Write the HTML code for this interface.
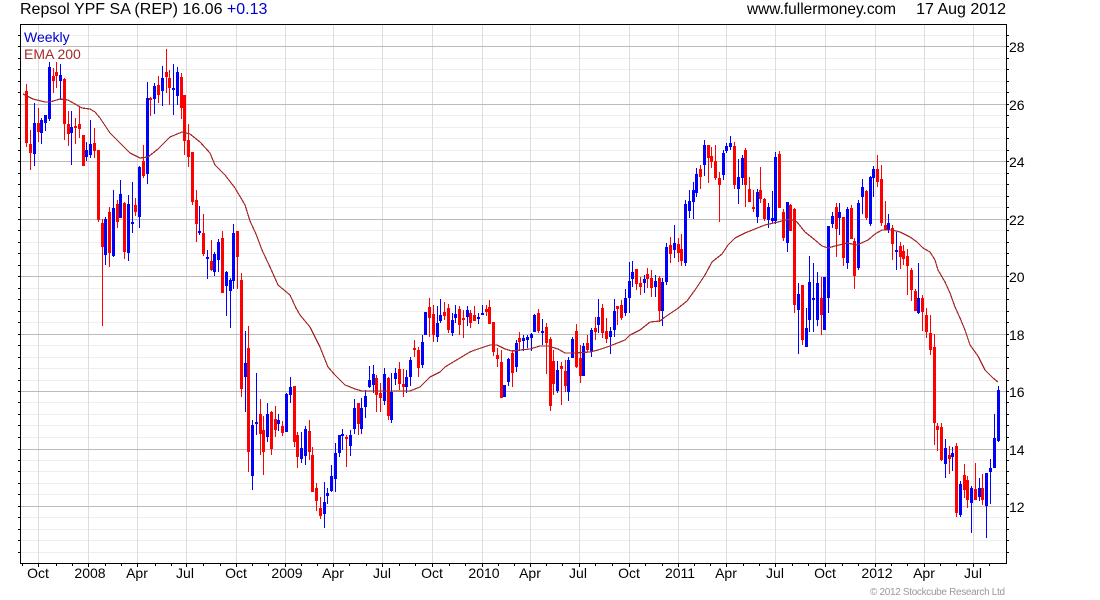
<!DOCTYPE html>
<html><head><meta charset="utf-8"><title>Repsol YPF SA (REP)</title>
<style>html,body{margin:0;padding:0;background:#fff;width:1100px;height:600px;overflow:hidden}svg{display:block}text{font-family:"Liberation Sans",Arial,sans-serif;font-size:14px;fill:#000}</style></head>
<body>
<svg width="1100" height="600" viewBox="0 0 1100 600" xmlns="http://www.w3.org/2000/svg">
<g shape-rendering="crispEdges" fill="none">
<path stroke="#eee" d="M21 35.5H1006M21 58.5H1006M21 69.5H1006M21 81.5H1006M21 92.5H1006M21 115.5H1006M21 127.5H1006M21 138.5H1006M21 150.5H1006M21 173.5H1006M21 184.5H1006M21 196.5H1006M21 207.5H1006M21 230.5H1006M21 242.5H1006M21 253.5H1006M21 265.5H1006M21 288.5H1006M21 299.5H1006M21 311.5H1006M21 322.5H1006M21 345.5H1006M21 357.5H1006M21 368.5H1006M21 380.5H1006M21 402.5H1006M21 414.5H1006M21 425.5H1006M21 437.5H1006M21 460.5H1006M21 471.5H1006M21 483.5H1006M21 494.5H1006M21 517.5H1006M21 529.5H1006M21 540.5H1006M21 552.5H1006"/>
<path stroke="#ddd" d="M38.5 25V563M88.5 25V563M137.5 25V563M186.5 25V563M236.5 25V563M285.5 25V563M333.5 25V563M382.5 25V563M432.5 25V563M482.5 25V563M530.5 25V563M579.5 25V563M629.5 25V563M678.5 25V563M726.5 25V563M775.5 25V563M825.5 25V563M875.5 25V563M924.5 25V563M973.5 25V563"/>
<path stroke="#bbb" d="M21 46.5H1006M21 104.5H1006M21 161.5H1006M21 219.5H1006M21 276.5H1006M21 334.5H1006M21 391.5H1006M21 449.5H1006M21 506.5H1006"/>
<path stroke="#000" d="M20.5 24.5H1006.5V563.5H20.5Z"/>
<path stroke="#000" d="M18 35.5h2M18 46.5h2M18 58.5h2M18 69.5h2M18 81.5h2M18 92.5h2M18 104.5h2M18 115.5h2M18 127.5h2M18 138.5h2M18 150.5h2M18 161.5h2M18 173.5h2M18 184.5h2M18 196.5h2M18 207.5h2M18 219.5h2M18 230.5h2M18 242.5h2M18 253.5h2M18 265.5h2M18 276.5h2M18 288.5h2M18 299.5h2M18 311.5h2M18 322.5h2M18 334.5h2M18 345.5h2M18 357.5h2M18 368.5h2M18 380.5h2M18 391.5h2M18 402.5h2M18 414.5h2M18 425.5h2M18 437.5h2M18 449.5h2M18 460.5h2M18 471.5h2M18 483.5h2M18 494.5h2M18 506.5h2M18 517.5h2M18 529.5h2M18 540.5h2M18 552.5h2"/>
<path stroke="#000" d="M1007 35.5h2M1007 46.5h2M1007 58.5h2M1007 69.5h2M1007 81.5h2M1007 92.5h2M1007 104.5h2M1007 115.5h2M1007 127.5h2M1007 138.5h2M1007 150.5h2M1007 161.5h2M1007 173.5h2M1007 184.5h2M1007 196.5h2M1007 207.5h2M1007 219.5h2M1007 230.5h2M1007 242.5h2M1007 253.5h2M1007 265.5h2M1007 276.5h2M1007 288.5h2M1007 299.5h2M1007 311.5h2M1007 322.5h2M1007 334.5h2M1007 345.5h2M1007 357.5h2M1007 368.5h2M1007 380.5h2M1007 391.5h2M1007 402.5h2M1007 414.5h2M1007 425.5h2M1007 437.5h2M1007 449.5h2M1007 460.5h2M1007 471.5h2M1007 483.5h2M1007 494.5h2M1007 506.5h2M1007 517.5h2M1007 529.5h2M1007 540.5h2M1007 552.5h2"/>
<path stroke="#000" d="M38.5 564v3M88.5 564v3M137.5 564v3M186.5 564v3M236.5 564v3M285.5 564v3M333.5 564v3M382.5 564v3M432.5 564v3M482.5 564v3M530.5 564v3M579.5 564v3M629.5 564v3M678.5 564v3M726.5 564v3M775.5 564v3M825.5 564v3M875.5 564v3M924.5 564v3M973.5 564v3M22.5 564v2M56.5 564v2M72.5 564v2M105.5 564v2M121.5 564v2M155.5 564v2M171.5 564v2M203.5 564v2M220.5 564v2M252.5 564v2M268.5 564v2M301.5 564v2M317.5 564v2M349.5 564v2M366.5 564v2M399.5 564v2M415.5 564v2M449.5 564v2M465.5 564v2M498.5 564v2M514.5 564v2M546.5 564v2M562.5 564v2M595.5 564v2M612.5 564v2M645.5 564v2M662.5 564v2M694.5 564v2M710.5 564v2M743.5 564v2M759.5 564v2M792.5 564v2M808.5 564v2M842.5 564v2M858.5 564v2M891.5 564v2M907.5 564v2M940.5 564v2M956.5 564v2M989.5 564v2"/>
<path stroke="#f00" d="M26.5 84V147M30.5 130V170M38.5 108V142M53.5 68V93M56.5 62V88M64.5 78V140M68.5 111V146M75.5 118V144M79.5 107V138M83.5 135V166M94.5 128V158M98.5 150V222M102.5 219V326M109.5 207V267M117.5 200V228M124.5 202V259M135.5 198V216M143.5 145V178M150.5 97V116M158.5 76V103M166.5 49V93M169.5 70V105M181.5 73V119M184.5 95V155M188.5 124V167M192.5 152V205M196.5 190V242M203.5 214V256M211.5 240V271M222.5 231V293M237.5 231V289M241.5 273V397M248.5 326V472M260.5 399V455M263.5 416V475M271.5 411V455M275.5 406V437M282.5 421V436M294.5 386V447M297.5 432V468M309.5 420V460M312.5 447V492M316.5 483V511M320.5 497V519M346.5 435V467M358.5 403V435M376.5 375V412M380.5 383V412M388.5 377V420M399.5 362V390M403.5 369V397M414.5 340V357M418.5 347V377M429.5 298V337M433.5 305V342M444.5 302V320M448.5 304V333M459.5 306V335M463.5 310V338M470.5 310V328M474.5 306V321M486.5 305V316M489.5 300V324M493.5 322V356M497.5 348V367M501.5 350V398M512.5 350V387M519.5 332V351M538.5 309V333M546.5 323V374M550.5 337V411M553.5 350V395M561.5 362V405M565.5 360V392M576.5 324V368M580.5 345V383M587.5 335V352M595.5 317V340M602.5 304V338M606.5 318V343M617.5 306V325M621.5 300V320M636.5 269V290M640.5 277V295M647.5 268V288M651.5 270V297M659.5 276V322M670.5 237V263M678.5 238V262M681.5 234V266M700.5 165V189M708.5 145V183M711.5 147V168M715.5 145V180M719.5 172V222M734.5 142V189M745.5 148V207M749.5 177V202M753.5 190V212M760.5 167V203M764.5 198V221M779.5 151V208M783.5 209V241M790.5 204V231M794.5 208V313M802.5 285V345M821.5 277V335M836.5 203V257M843.5 217V266M851.5 205V239M854.5 238V289M866.5 190V220M877.5 155V187M881.5 165V226M885.5 201V230M892.5 225V260M900.5 242V269M903.5 245V265M907.5 249V295M911.5 268V301M915.5 289V311M922.5 295V331M926.5 308V338M930.5 315V355M934.5 334V445M937.5 423V451M941.5 423V461M949.5 446V474M956.5 443V517M964.5 464V498M967.5 476V508M975.5 463V500M982.5 474V505"/>
<path stroke="#00f" d="M34.5 103V166M41.5 118V144M45.5 115V131M49.5 62V121M60.5 64V100M71.5 111V165M86.5 142V161M90.5 120V158M105.5 217V265M113.5 190V257M120.5 180V218M128.5 195V261M132.5 182V233M139.5 166V228M147.5 82V184M154.5 83V114M162.5 66V106M173.5 64V115M177.5 67V105M199.5 206V235M207.5 250V279M214.5 252V276M218.5 239V272M226.5 271V316M230.5 278V328M233.5 224V289M245.5 331V412M252.5 420V490M256.5 373V435M267.5 403V442M278.5 414V431M286.5 393V432M290.5 377V403M301.5 432V463M305.5 426V465M324.5 482V528M327.5 488V504M331.5 465V492M335.5 443V492M339.5 435V457M342.5 429V450M350.5 430V456M354.5 399V434M361.5 398V434M365.5 390V418M369.5 366V388M373.5 365V393M384.5 368V405M391.5 373V423M395.5 368V385M406.5 370V393M410.5 357V386M422.5 335V368M425.5 312V335M437.5 306V342M440.5 299V323M452.5 313V336M455.5 305V323M467.5 306V326M478.5 313V324M482.5 305V315M504.5 385V397M508.5 358V386M516.5 340V372M523.5 335V351M527.5 335V348M531.5 333V351M534.5 314V332M542.5 319V345M557.5 361V393M568.5 357V401M572.5 337V358M583.5 343V376M591.5 328V357M598.5 299V333M610.5 327V354M614.5 299V337M625.5 289V316M629.5 262V313M632.5 261V287M644.5 275V293M655.5 275V297M662.5 278V326M666.5 243V285M674.5 225V258M685.5 200V266M689.5 190V218M693.5 182V219M696.5 168V197M704.5 140V176M723.5 150V180M726.5 143V153M730.5 136V150M738.5 159V204M742.5 155V185M757.5 189V223M768.5 203V228M772.5 191V223M775.5 152V224M787.5 202V252M798.5 283V354M806.5 308V347M809.5 256V332M813.5 263V332M817.5 272V326M824.5 277V330M828.5 226V313M832.5 212V228M839.5 203V235M847.5 207V269M858.5 200V270M862.5 179V214M870.5 176V226M873.5 166V197M888.5 214V233M896.5 232V270M918.5 263V314M945.5 439V478M952.5 447V471M960.5 481V517M971.5 486V533M979.5 478V501M986.5 473V538M990.5 459V504M994.5 414V468M998.5 386V442"/>
<path stroke="#f00" stroke-width="3" d="M26.5 91V143M30.5 144V153M38.5 123V132M53.5 76V81M56.5 72V76M64.5 79V124M68.5 124V134M75.5 126V128M79.5 124V129M83.5 135V166M94.5 143V151M98.5 150V220M102.5 223V247M109.5 212V253M117.5 204V222M124.5 203V252M135.5 205V212M143.5 161V176M150.5 98V100M158.5 85V95M166.5 72V77M169.5 78V88M181.5 77V108M184.5 95V141M188.5 140V157M192.5 152V202M196.5 200V224M203.5 233V254M211.5 261V270M222.5 238V293M237.5 231V257M241.5 280V389M248.5 348V452M260.5 414V434M263.5 430V452M271.5 412V449M275.5 419V430M282.5 426V433M294.5 386V442M297.5 435V457M309.5 431V452M312.5 455V492M316.5 488V501M320.5 508V516M346.5 437V439M358.5 403V424M376.5 378V395M380.5 393V398M388.5 378V416M399.5 369V384M403.5 384V387M414.5 348V350M418.5 350V368M429.5 307V318M433.5 314V335M444.5 312V316M448.5 308V330M459.5 309V325M463.5 318V320M470.5 313V323M474.5 315V321M486.5 309V312M489.5 307V324M493.5 322V352M497.5 355V359M501.5 362V398M512.5 353V373M519.5 338V342M538.5 313V331M546.5 327V343M550.5 339V406M553.5 361V384M561.5 366V369M565.5 371V386M576.5 331V367M580.5 358V376M587.5 343V350M595.5 328V332M602.5 308V333M606.5 331V339M617.5 306V309M621.5 305V318M636.5 269V284M640.5 283V287M647.5 274V279M651.5 278V288M659.5 278V311M670.5 245V254M678.5 244V253M681.5 249V261M700.5 169V177M708.5 145V158M711.5 156V162M715.5 161V178M719.5 178V185M734.5 146V185M745.5 150V185M749.5 189V202M753.5 207V209M760.5 190V199M764.5 199V219M779.5 154V208M783.5 212V238M790.5 205V231M794.5 209V305M802.5 285V340M821.5 298V315M836.5 207V229M843.5 217V258M851.5 208V239M854.5 241V276M866.5 191V218M877.5 169V182M881.5 179V223M885.5 225V230M892.5 228V244M900.5 246V257M903.5 251V259M907.5 256V266M911.5 270V290M915.5 291V311M922.5 298V312M926.5 315V332M930.5 333V350M934.5 347V423M937.5 426V430M941.5 427V460M949.5 455V459M956.5 446V513M964.5 475V490M967.5 480V500M975.5 489V500M982.5 488V500"/>
<path stroke="#00f" stroke-width="3" d="M34.5 123V154M41.5 120V133M45.5 115V123M49.5 67V119M60.5 75V81M71.5 127V133M86.5 150V157M90.5 144V155M105.5 219V255M113.5 208V256M120.5 194V218M128.5 204V253M132.5 222V224M139.5 167V217M147.5 98V174M154.5 86V99M162.5 78V91M173.5 88V90M177.5 72V96M199.5 231V233M207.5 257V259M214.5 254V272M218.5 242V260M226.5 272V286M230.5 280V291M233.5 233V281M245.5 363V377M252.5 425V476M256.5 422V424M267.5 414V437M278.5 420V424M286.5 394V432M290.5 387V395M301.5 448V459M305.5 429V456M324.5 502V514M327.5 493V496M331.5 476V491M335.5 453V479M339.5 435V453M342.5 434V436M350.5 435V446M354.5 408V429M361.5 408V429M365.5 396V407M369.5 380V387M373.5 374V385M384.5 374V401M391.5 392V420M395.5 373V379M406.5 377V387M410.5 360V377M422.5 342V365M425.5 312V335M437.5 323V337M440.5 315V321M452.5 320V333M455.5 314V318M467.5 310V317M478.5 317V319M482.5 313V315M504.5 385V397M508.5 359V382M516.5 343V367M523.5 338V341M527.5 337V340M531.5 334V338M534.5 315V332M542.5 331V333M557.5 370V391M568.5 360V392M572.5 339V358M583.5 346V376M591.5 330V352M598.5 317V325M610.5 331V337M614.5 311V330M625.5 298V313M629.5 281V298M632.5 272V279M644.5 279V283M655.5 281V287M662.5 282V311M666.5 247V282M674.5 243V250M685.5 204V263M689.5 201V211M693.5 190V202M696.5 174V193M704.5 145V165M723.5 153V175M726.5 146V151M730.5 143V147M738.5 177V189M742.5 158V178M757.5 192V217M768.5 207V220M772.5 218V221M775.5 157V221M787.5 202V243M798.5 294V310M806.5 328V347M809.5 282V320M813.5 298V300M817.5 283V320M824.5 277V330M828.5 226V298M832.5 216V224M839.5 212V218M847.5 209V263M858.5 203V268M862.5 187V197M870.5 177V224M873.5 169V178M888.5 223V230M896.5 250V252M918.5 298V313M945.5 448V464M952.5 453V457M960.5 484V515M971.5 488V503M979.5 488V497M986.5 473V506M990.5 468V472M994.5 438V468M998.5 390V441"/>
<path stroke="#a52a2a" stroke-width="1.2" d="M23 94L33 99L45 102L50 102L60 99L68 100L75 104L82 108L90 109L95 112L100 118L110 133L120 143L130 153L140 158L148 157L158 149L170 137L182 132L190 134L200 142L210 153L215 165L225 175L235 188L241 198L245 205L250 221L256 234L262 250L270 267L278 285L290 295L296 308L300 315L310 327L320 347L328 367L335 375L345 385L355 389L362 391L375 391L395 391L410 391L420 387L430 377L440 372L445 367L460 358L470 352L475 350L490 345L497 345L505 349L512 351L520 350L530 349L540 346L548 346L558 349L565 353L575 353L590 352L598 350L610 346L625 340L630 335L640 330L650 322L660 321L665 317L677 309L687 301L695 290L705 275L712 262L722 254L728 245L735 238L745 233L755 229L765 225L778 222L790 219L797 222L805 232L815 240L822 246L828 248L835 246L847 243L857 245L868 240L875 234L882 230L892 230L900 232L910 237L917 242L923 248L930 252L935 260L938 270L945 282L950 293L955 307L960 318L965 330L970 345L978 356L985 370L993 378L998 382"/>
</g>
<text x="20" y="14" style="font-size:16px">Repsol YPF SA (REP) 16.06 <tspan fill="#0000d0">+0.13</tspan></text>
<text x="747" y="14" textLength="149" lengthAdjust="spacingAndGlyphs" style="font-size:16px">www.fullermoney.com</text>
<text x="1006" y="14" text-anchor="end" style="font-size:16px">17 Aug 2012</text>
<text x="24" y="42" style="fill:#0000c8">Weekly</text>
<text x="24" y="59" style="fill:#a52a2a">EMA 200</text>
<g>
<text x="1009" y="52">28</text><text x="1009" y="110">26</text><text x="1009" y="167">24</text><text x="1009" y="225">22</text><text x="1009" y="282">20</text><text x="1009" y="340">18</text><text x="1009" y="397">16</text><text x="1009" y="455">14</text><text x="1009" y="512">12</text>
</g>
<g text-anchor="middle">
<text x="38" y="578">Oct</text><text x="90" y="578">2008</text><text x="137" y="578">Apr</text><text x="185" y="578">Jul</text><text x="236" y="578">Oct</text><text x="287" y="578">2009</text><text x="333" y="578">Apr</text><text x="382" y="578">Jul</text><text x="432" y="578">Oct</text><text x="484" y="578">2010</text><text x="530" y="578">Apr</text><text x="578" y="578">Jul</text><text x="629" y="578">Oct</text><text x="680" y="578">2011</text><text x="726" y="578">Apr</text><text x="775" y="578">Jul</text><text x="825" y="578">Oct</text><text x="877" y="578">2012</text><text x="924" y="578">Apr</text><text x="973" y="578">Jul</text>
</g>
<text x="870" y="595" textLength="135" lengthAdjust="spacing" style="font-size:10px;fill:#999">© 2012 Stockcube Research Ltd</text>
</svg>
</body></html>
